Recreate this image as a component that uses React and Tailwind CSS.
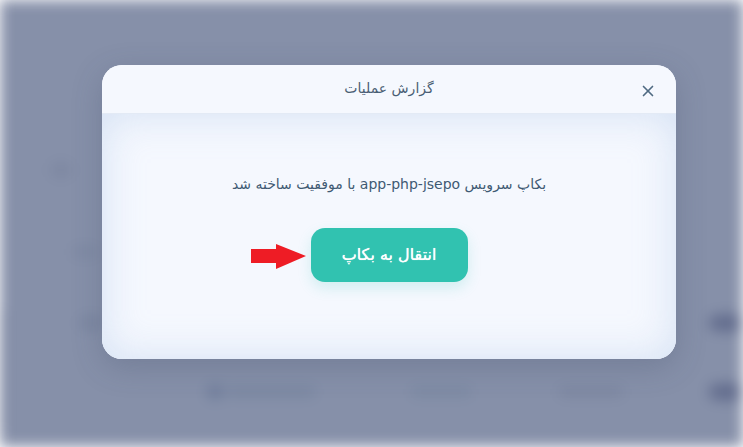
import { X } from 'lucide-react'

function BlurredPage() {
  return (
    <div className="h-full w-full bg-[#8690a9] blur-[7px]">
      <div className="flex h-full flex-col">
        <div className="h-[160px]" />
        <div className="flex h-[20px] items-center">
          <div className="ml-[52px] h-[14px] w-[18px] rounded bg-[#7c86a0]" />
        </div>
        <div className="h-[63px]" />
        <div className="flex h-[18px] items-center">
          <div className="ml-[72px] h-[10px] w-[26px] rounded bg-[#7d88a2]" />
        </div>
        <div className="h-[50px]" />
        <div className="flex h-[24px] items-center">
          <div className="h-[120px] w-[4px] self-start bg-[#6f7996]" />
          <div className="ml-[76px] h-[14px] w-[22px] rounded bg-[#7b86a0]" />
          <div className="ml-auto h-[16px] w-[34px] rounded-full bg-[#616b8c]" />
        </div>
        <div className="h-[45px]" />
        <div className="flex h-[24px] items-center">
          <div className="ml-[207px] h-[14px] w-[16px] rounded-full bg-[#6c7b99]" />
          <div className="ml-[4px] h-[10px] w-[88px] rounded bg-[#7886a0]" />
          <div className="ml-[96px] h-[10px] w-[60px] rounded bg-[#7b89a2]" />
          <div className="ml-[88px] h-[10px] w-[64px] rounded bg-[#7c86a0]" />
          <div className="ml-auto h-[16px] w-[34px] rounded-full bg-[#616b8c]" />
        </div>
      </div>
    </div>
  )
}

export default function App() {
  return (
    <div className="relative h-[447px] w-[743px] overflow-hidden" style={{ fontFamily: '"DejaVu Sans", sans-serif' }}>
      <BlurredPage />

      <div className="absolute inset-0 flex items-start justify-center pl-[35px] pt-[65px]">
        <div dir="rtl" className="flex h-[294px] w-[574px] flex-col overflow-hidden rounded-[20px] bg-[#f4f7fe] shadow-[0_8px_30px_rgba(60,70,100,0.25)]">
          <div className="relative flex h-[49px] shrink-0 items-center justify-center border-b border-[#e3eaf5] bg-[#f5f8fe]">
            <span className="mt-[-2px] text-[14px] text-[#4a5e74]">گزارش عملیات</span>
            <button className="absolute right-[19px] top-[17px] text-[#4f6a82]">
              <X size={18} strokeWidth={2.2} />
            </button>
          </div>

          <div className="flex flex-1 flex-col items-center bg-[#f5f8fe] shadow-[inset_0_0_40px_rgba(200,216,240,0.75)]">
            <p className="mt-[60px] text-[14px] text-[#3f5a73]">
              بکاپ سرویس <span dir="ltr">app-php-jsepo</span> با موفقیت ساخته شد
            </p>
            <div className="relative mt-[33px]">
              <button className="flex h-[54px] w-[157px] items-center justify-center rounded-[14px] bg-[#31c2b0] text-[16px] text-white shadow-[0_6px_14px_rgba(49,194,176,0.18)] [text-shadow:0_0_0.7px_#fff]">
                انتقال به بکاپ
              </button>
              <svg
                className="absolute left-[-61px] top-[16px]"
                width="56"
                height="26"
                viewBox="0 0 56 26"
              >
                <rect x="1" y="5" width="28" height="14" fill="#ee1c25" />
                <polygon points="26,0 56,12 26,25" fill="#ee1c25" />
              </svg>
            </div>
          </div>
        </div>
      </div>
    </div>
  )
}
